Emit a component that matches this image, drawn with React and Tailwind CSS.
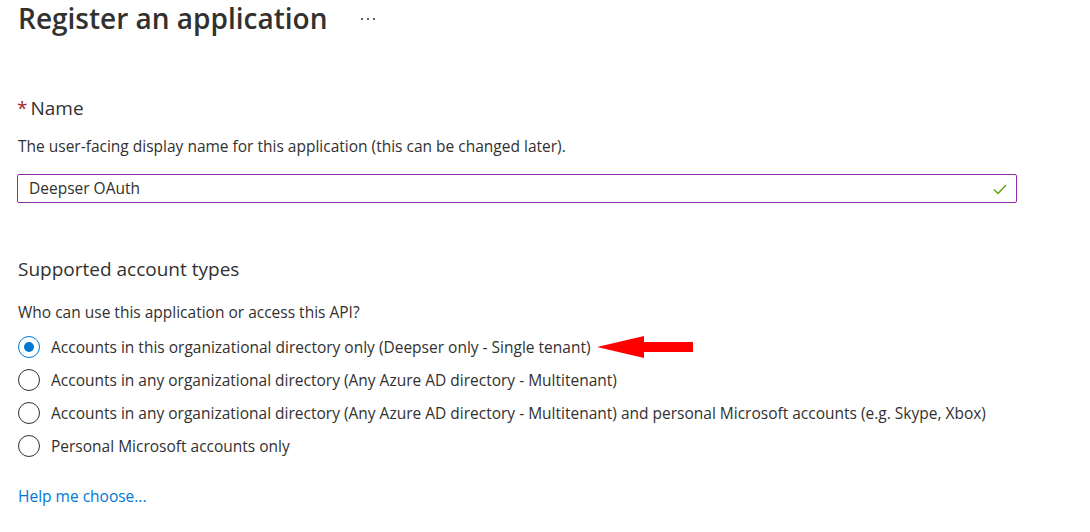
import { useState } from 'react';

const accountTypes = [
  'Accounts in this organizational directory only (Deepser only - Single tenant)',
  'Accounts in any organizational directory (Any Azure AD directory - Multitenant)',
  'Accounts in any organizational directory (Any Azure AD directory - Multitenant) and personal Microsoft accounts (e.g. Skype, Xbox)',
  'Personal Microsoft accounts only',
];

const Radio = ({ checked }) => (
  <span
    className={`flex h-[22px] w-[22px] shrink-0 items-center justify-center rounded-full border ${
      checked ? 'border-[#0078d4]' : 'border-[#323130]'
    }`}
  >
    {checked && <span className="h-[10px] w-[10px] rounded-full bg-[#0078d4]" />}
  </span>
);

// red pointer arrow next to the first option
const PointerArrow = () => (
  <svg width="96" height="22" viewBox="0 0 96 22" className="ml-[6px]">
    <polygon points="0,11 47,0 47,6 96,6 96,16 47,16 47,22" fill="#ff0000" />
  </svg>
);

const App = () => {
  const [selected, setSelected] = useState(0);
  const [name, setName] = useState('Deepser OAuth');

  return (
    <div
      className="min-h-[532px] w-[1090px] bg-white pl-[18px] text-[#323130]"
      style={{ fontFamily: '"Open Sans", "Noto Sans", sans-serif' }}
    >
      {/* Header */}
      <div className="flex h-[36px] items-center">
        <h1 className="text-[28px] font-semibold leading-[36px] text-[#323130]">Register an application</h1>
        <span className="ml-[34px] flex gap-[4px] pt-[2px]">
          <span className="h-[2px] w-[2px] bg-[#605e5c]" />
          <span className="h-[2px] w-[2px] bg-[#605e5c]" />
          <span className="h-[2px] w-[2px] bg-[#605e5c]" />
        </span>
      </div>

      {/* Name */}
      <div className="mt-[58px] flex items-center text-[19px] leading-[28px]">
        <span className="-ml-px mr-[3px] text-[#a4262c]">*</span>
        <span>Name</span>
      </div>
      <p className="mt-[14px] text-[15.5px] leading-[20px]">
        The user-facing display name for this application (this can be changed later).
      </p>
      <div className="-ml-px mt-[18px] flex h-[29px] w-[1000px] items-center rounded-[2px] border border-[#8e2ca8] pl-[11px] pr-[8px]">
        <input
          value={name}
          onChange={(e) => setName(e.target.value)}
          className="flex-1 bg-transparent text-[15.5px] text-[#323130] outline-none"
        />
        <svg width="16" height="16" viewBox="0 0 16 16" fill="none" stroke="#57a300" strokeWidth="1.3">
          <path d="M2 8.5l4 4L14 4" />
        </svg>
      </div>

      {/* Supported account types */}
      <h2 className="mt-[52px] text-[19px] leading-[28px]">Supported account types</h2>
      <p className="mt-[19px] text-[15.5px] leading-[20px]">Who can use this application or access this API?</p>
      <div className="mt-[14px] flex flex-col gap-[11px]">
        {accountTypes.map((label, i) => (
          <label
            key={label}
            className="flex h-[22px] cursor-pointer items-center"
            onClick={() => setSelected(i)}
          >
            <Radio checked={selected === i} />
            <span className="ml-[11px] text-[15.5px] leading-[20px]">{label}</span>
            {i === 0 && <PointerArrow />}
          </label>
        ))}
      </div>

      <a href="#" className="mt-[29px] block text-[15.5px] leading-[20px] text-[#0078d4]">
        Help me choose...
      </a>
    </div>
  );
};

export default App;
